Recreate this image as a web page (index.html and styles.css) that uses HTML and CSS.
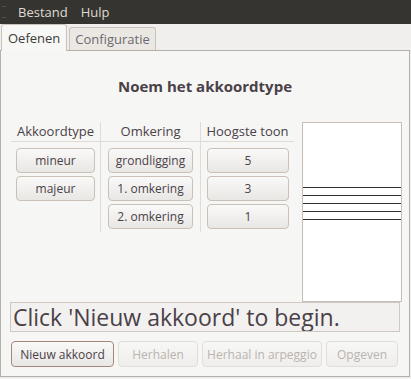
FILE: index.html
```html
<!DOCTYPE html>
<html lang="nl">
<head>
  <meta charset="UTF-8" />
  <title>Akkoorden</title>
  <link rel="stylesheet" href="styles.css">
</head>
<body>

<div class="menubar">
  <span class="grip"></span>
  <span class="menu-item">Bestand</span>
  <span class="menu-item">Hulp</span>
</div>

<div class="tabs">
  <div class="tab active">Oefenen</div>
  <div class="tab">Configuratie</div>
</div>

<div class="panel">
  <h3 class="title">Noem het akkoordtype</h3>

  <div class="main">
    <div class="answers">
      <div class="col col-type">
        <div class="col-head">Akkoordtype</div>
        <div class="col-body">
          <button class="btn">mineur</button>
          <button class="btn">majeur</button>
        </div>
      </div>
      <div class="col col-inv">
        <div class="col-head">Omkering</div>
        <div class="col-body">
          <button class="btn">grondligging</button>
          <button class="btn">1. omkering</button>
          <button class="btn">2. omkering</button>
        </div>
      </div>
      <div class="col col-top">
        <div class="col-head">Hoogste toon</div>
        <div class="col-body">
          <button class="btn">5</button>
          <button class="btn">3</button>
          <button class="btn">1</button>
        </div>
      </div>
    </div>

    <div class="staff">
      <div class="lines">
        <span></span><span></span><span></span><span></span><span></span>
      </div>
    </div>
  </div>

  <div class="status">Click 'Nieuw akkoord' to begin.</div>

  <div class="actions">
    <button class="btn act primary" style="width:103px">Nieuw akkoord</button>
    <button class="btn act" disabled style="width:80px">Herhalen</button>
    <button class="btn act" disabled style="width:120px">Herhaal in arpeggio</button>
    <button class="btn act" disabled style="width:72px">Opgeven</button>
  </div>
</div>

</body>
</html>
```

FILE: styles.css
```css
body {
  margin: 0;
  width: 411px;
  height: 379px;
  overflow: hidden;
  background: #f0efed;
  font-family: "Open Sans", "DejaVu Sans", sans-serif;
  font-size: 12px;
  color: #4a4148;
}

.menubar {
  height: 24px;
  background: #363430;
  display: flex;
  align-items: center;
  color: #dfdbd2;
  font-size: 13px;
}
.grip {
  width: 4px;
  height: 10px;
  margin: 0 12px 0 2px;
  border-top: 1px dotted #5a5750;
  border-bottom: 1px dotted #5a5750;
}
.menu-item {
  margin-right: 13px;
}

.tabs {
  height: 26px;
  display: flex;
  align-items: flex-end;
  padding-left: 1px;
  gap: 2px;
}
.tab {
  height: 22px;
  line-height: 22px;
  padding: 0 5px;
  background: #ebe8e3;
  border: 1px solid #c8c2ba;
  border-bottom: none;
  border-radius: 3px 3px 0 0;
  color: #6f6870;
  font-size: 13px;
}
.tab.active {
  height: 26px;
  line-height: 26px;
  margin-bottom: -1px;
  padding: 0 6px;
  background: #f7f7f6;
  color: #3c3c3c;
  position: relative;
  z-index: 1;
}

.panel {
  width: 408px;
  height: 325px;
  border: 1px solid #b3afa9;
  background: #f6f6f5;
}

.title {
  margin: 25px 0 0;
  height: 21px;
  line-height: 21px;
  text-align: center;
  font-size: 15px;
  font-weight: bold;
}

.main {
  display: flex;
  margin: 25px 0 0 10px;
  height: 180px;
}

.answers {
  display: flex;
  width: 283px;
  height: 110px;
}
.col {
  display: flex;
  flex-direction: column;
}
.col-type { width: 90px; }
.col-inv { width: 100px; }
.col-top { width: 93px; }
.col-head {
  height: 19px;
  line-height: 19px;
  text-align: center;
  border-bottom: 1px solid #e0dbd6;
  font-size: 13px;
}
.col-body {
  flex: 1;
  display: flex;
  flex-direction: column;
  gap: 3px;
  padding-top: 6px;
}
.col-type .col-body,
.col-inv .col-body,
.col-type .col-head,
.col-inv .col-head {
  border-right: 1px solid #e0dbd6;
}
.col-type .btn { margin: 0 5px; }
.col-inv .btn { margin: 0 7px; }
.col-top .btn { margin: 0 5px 0 6px; }

.btn {
  height: 25px;
  padding: 0;
  border: 1px solid #c9c0b8;
  border-radius: 4px;
  background: linear-gradient(#f9f9f8, #e9e7e4);
  font-family: inherit;
  font-size: 12px;
  color: #4a4148;
}

.staff {
  margin-left: 8px;
  width: 98px;
  height: 178px;
  background: #fff;
  border: 1px solid #c9beb6;
}
.lines {
  margin-top: 64px;
  display: flex;
  flex-direction: column;
  gap: 7px;
}
.lines span {
  display: block;
  height: 1px;
  background: #2e2e2e;
}

.status {
  margin: 0 9px;
  height: 28px;
  line-height: 28px;
  padding-left: 2px;
  border: 1px solid #d0c8c0;
  background: #f2f1ef;
  font-size: 23px;
  white-space: nowrap;
  overflow: hidden;
}

.actions {
  display: flex;
  gap: 4px;
  margin: 9px 0 0 10px;
}
.act {
  height: 26px;
}
.act.primary {
  border-color: #a4877c;
}
.act:disabled {
  color: #bab3af;
  border-color: #e2ddd8;
  background: linear-gradient(#f7f7f6, #efeeec);
}
```
